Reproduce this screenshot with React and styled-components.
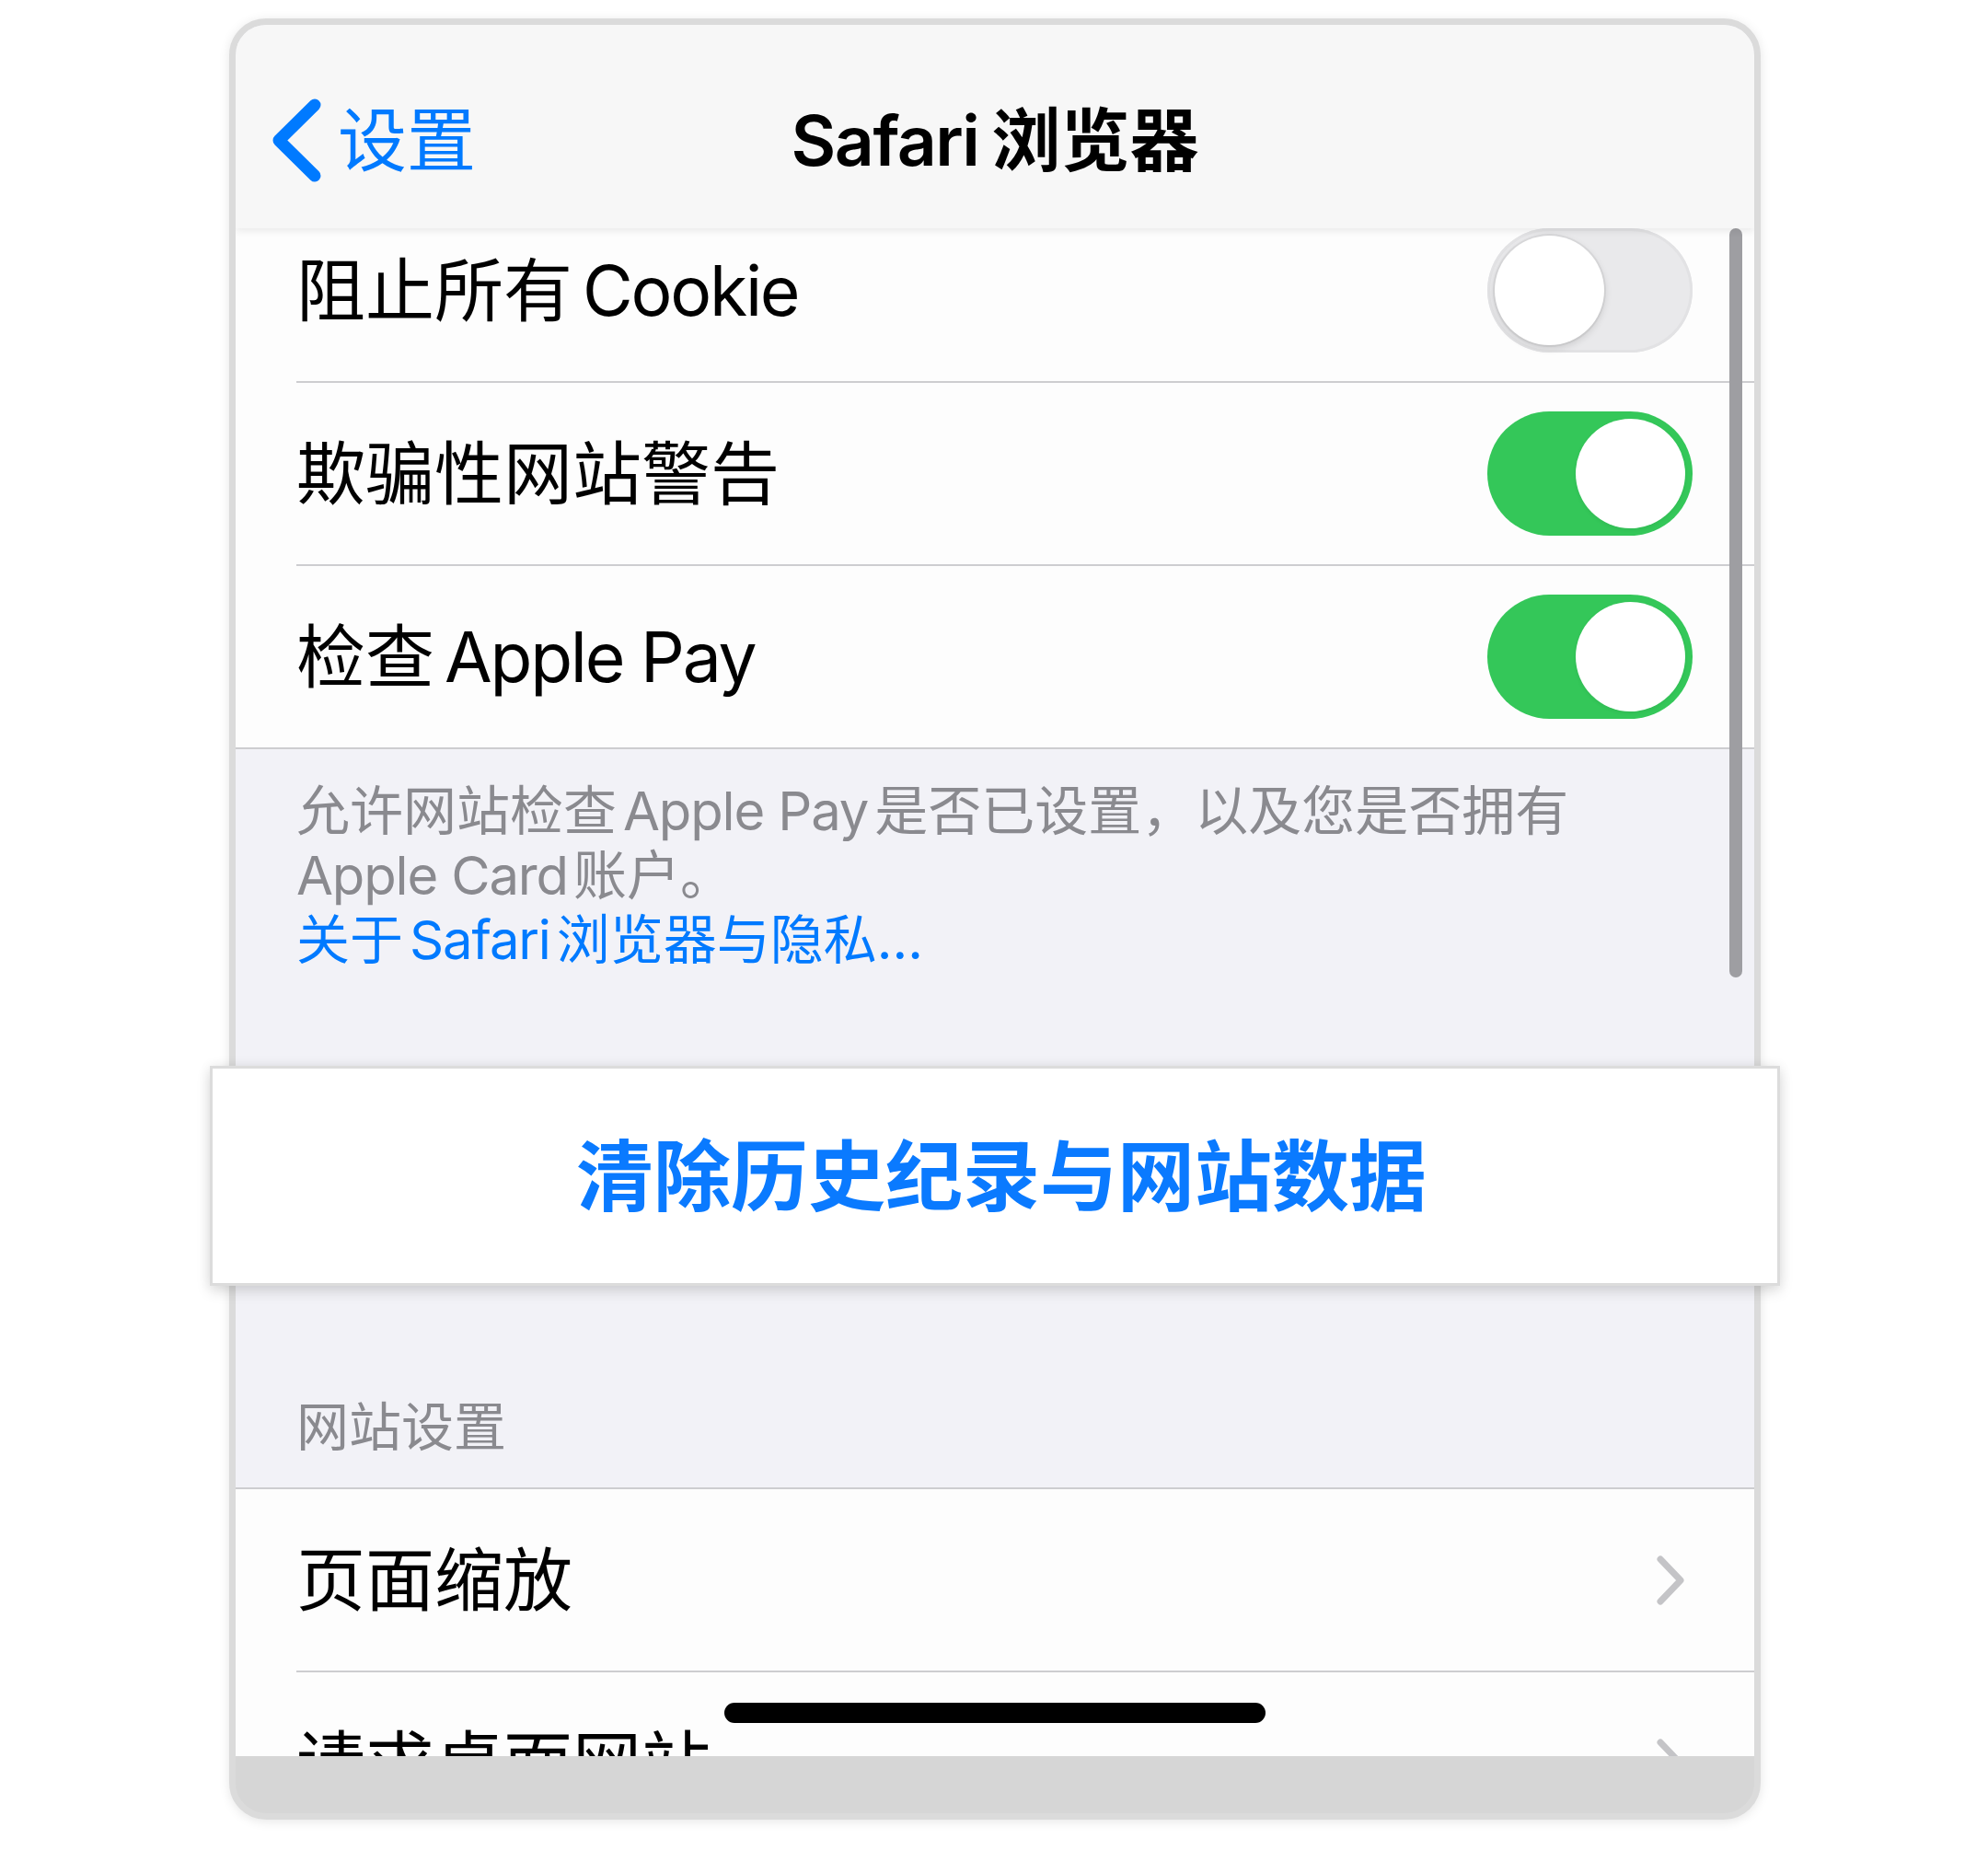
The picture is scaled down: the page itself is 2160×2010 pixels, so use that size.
import React from 'react';
import styled, { createGlobalStyle } from 'styled-components';

const GlobalStyle = createGlobalStyle`
    body {
        margin: 0;
        background: #ffffff;
        font-family: Inter, "Noto Sans CJK SC", sans-serif;
    }
    * {
        box-sizing: border-box;
    }
`;

const BackChevron = () => (
    <svg width="53" height="91" viewBox="0 0 53 91">
        <polyline points="46,7 7,45.5 46,84" fill="none" stroke="#007aff" strokeWidth="13" strokeLinecap="round" strokeLinejoin="round"/>
    </svg>
);

const Disclosure = () => (
    <Chevron width="32" height="56" viewBox="0 0 32 56">
        <polyline points="5,5 27,28 5,51" fill="none" stroke="#c4c4c7" strokeWidth="7" strokeLinecap="round" strokeLinejoin="round"/>
    </Chevron>
);

const Switch = ({ on }) => (
    <Track $on={on}>
        <Knob $on={on}/>
    </Track>
);

const App = () => {
    return (
        <Page>
            <GlobalStyle/>
            <Frame>
                <TopScreen>
                    <NavBar>
                        <Back>
                            <BackChevron/>
                            <BackLabel>设置</BackLabel>
                        </Back>
                        <Title><Latin $right="14px">Safari</Latin>浏览器</Title>
                        <span/>
                    </NavBar>
                    <List $pulled>
                        <Row>
                            <Label>阻止所有<Latin $left="11px" $tight>Cookie</Latin></Label>
                            <Switch on={false}/>
                        </Row>
                        <Row>
                            <Label>欺骗性网站警告</Label>
                            <Switch on/>
                        </Row>
                        <Row $last>
                            <Label>检查<Latin $left="11px" $tight>Apple Pay</Latin></Label>
                            <Switch on/>
                        </Row>
                    </List>
                    <Footer>
                        允许网站检查<Latin $left="7px" $right="7px">Apple Pay</Latin>是否已设置，以及您是否拥有<br/>
                        <Latin $right="6px">Apple Card</Latin>账户。<br/>
                        <Link>关于<Latin $left="7px" $right="7px">Safari</Latin>浏览器与隐私...</Link>
                    </Footer>
                    <ScrollBar/>
                </TopScreen>
                <ClearCard>清除历史纪录与网站数据</ClearCard>
                <BottomScreen>
                    <SectionHeader>网站设置</SectionHeader>
                    <List $top>
                        <Row>
                            <Label>页面缩放</Label>
                            <Disclosure/>
                        </Row>
                        <Row $last>
                            <Label>请求桌面网站</Label>
                            <Disclosure/>
                        </Row>
                    </List>
                    <HomeIndicator/>
                </BottomScreen>
            </Frame>
        </Page>
    );
}

const Page = styled.div`
    width: 2160px;
    height: 2010px;
    padding: 20px 0 0 249px;
`;

const Frame = styled.div`
    display: flex;
    flex-direction: column;
    width: 1664px;
    height: 1957px;
    border: 7px solid #dbdbdb;
    border-radius: 40px;
    background: #d6d6d6;
    box-shadow: 0 2px 12px rgba(0, 0, 0, 0.10);
`;

const TopScreen = styled.div`
    position: relative;
    display: flex;
    flex-direction: column;
    height: 1131px;
    flex-shrink: 0;
    overflow: hidden;
    border-radius: 33px 33px 0 0;
    background: #f2f2f7;
`;

const NavBar = styled.div`
    position: relative;
    z-index: 2;
    display: grid;
    grid-template-columns: 1fr auto 1fr;
    align-items: center;
    height: 221px;
    flex-shrink: 0;
    padding-top: 30px;
    background: #f7f7f7;
    box-shadow: 0 3px 8px rgba(0, 0, 0, 0.08);
`;

const Back = styled.div`
    display: flex;
    align-items: center;
    gap: 18px;
    padding-left: 40px;
`;

const BackLabel = styled.span`
    font-size: 75px;
    line-height: 1;
    color: #007aff;
`;

const Title = styled.span`
    font-size: 75px;
    line-height: 1;
    font-weight: 600;
    color: #000;
`;

const Latin = styled.span`
    margin-left: ${p => p.$left || '0'};
    margin-right: ${p => p.$right || '0'};
    letter-spacing: ${p => (p.$tight ? '-0.03em' : '-0.02em')};
`;

const List = styled.div`
    margin-top: ${p => (p.$pulled ? '-31px' : '0')};
    background: #fdfdfd;
    border-top: ${p => (p.$top ? '2px solid #cdcdd0' : 'none')};
    border-bottom: 2px solid #cdcdd0;
`;

const Row = styled.div`
    display: flex;
    align-items: center;
    justify-content: space-between;
    height: ${p => (p.$last ? '197px' : '199px')};
    margin-left: 66px;
    padding-right: 67px;
    border-bottom: ${p => (p.$last ? 'none' : '2px solid #cdcdd0')};
`;

const Label = styled.span`
    font-size: 75px;
    line-height: 1;
    color: #000;
`;

const Chevron = styled.svg`
    margin-right: 8px;
`;

const Track = styled.span`
    display: flex;
    align-items: center;
    justify-content: ${p => (p.$on ? 'flex-end' : 'flex-start')};
    width: 223px;
    height: 135px;
    padding: 8px;
    border-radius: 68px;
    background: ${p => (p.$on ? '#34c759' : '#e9e9eb')};
    box-shadow: ${p => (p.$on ? 'none' : 'inset 0 0 0 3px #e2e2e4')};
`;

const Knob = styled.span`
    width: 119px;
    height: 119px;
    border-radius: 50%;
    background: #ffffff;
    box-shadow: ${p => (p.$on
        ? '0 2px 4px rgba(0, 0, 0, 0.06)'
        : '0 3px 9px rgba(0, 0, 0, 0.14), 0 0 0 2px rgba(0, 0, 0, 0.05)')};
`;

const Footer = styled.div`
    padding: 32px 66px 0;
    font-size: 58px;
    line-height: 70px;
    color: #8a8a8f;
`;

const Link = styled.span`
    color: #007aff;
`;

const ScrollBar = styled.div`
    position: absolute;
    top: 221px;
    right: 13px;
    width: 14px;
    height: 814px;
    border-radius: 7px;
    background: #9e9ea2;
`;

const ClearCard = styled.div`
    position: relative;
    z-index: 3;
    display: flex;
    align-items: center;
    justify-content: center;
    height: 239px;
    flex-shrink: 0;
    margin: 0 -28px;
    padding: 0 0 10px 14px;
    border: 3px solid #dcdcdc;
    background: #ffffff;
    box-shadow: 0 6px 14px rgba(0, 0, 0, 0.13), 0 0 14px rgba(0, 0, 0, 0.06);
    font-size: 84px;
    font-weight: 600;
    color: #0a7aff;
`;

const BottomScreen = styled.div`
    position: relative;
    height: 511px;
    flex-shrink: 0;
    overflow: hidden;
    padding-top: 119px;
    background: #f2f2f7;
`;

const SectionHeader = styled.div`
    padding: 0 66px 30px;
    font-size: 57px;
    line-height: 70px;
    color: #8a8a8f;
`;

const HomeIndicator = styled.div`
    position: absolute;
    top: 453px;
    left: 50%;
    width: 588px;
    height: 22px;
    transform: translateX(-50%);
    border-radius: 11px;
    background: #000000;
`;

export default App;
